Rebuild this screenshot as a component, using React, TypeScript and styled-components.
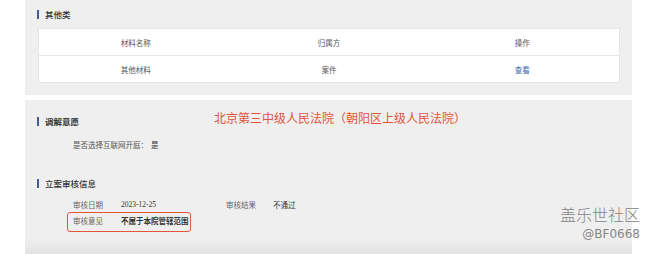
import React from 'react'
import styled, { createGlobalStyle } from 'styled-components'

const GlobalStyle = createGlobalStyle`
  html, body {
    margin: 0;
    padding: 0;
    background: #ffffff;
  }
  body {
    font-family: "Noto Sans CJK SC", "Liberation Serif", serif;
    color: #333333;
  }
`

const materials = [{ name: '其他材料', owner: '案件', action: '查看' }]

export default function App() {
  return (
    <Page>
      <GlobalStyle />

      <Panel>
        <SectionTitle>其他类</SectionTitle>
        <Table>
          <HeadRow>
            <Cell>材料名称</Cell>
            <Cell>归属方</Cell>
            <Cell>操作</Cell>
          </HeadRow>
          {materials.map((m) => (
            <BodyRow key={m.name}>
              <Cell>{m.name}</Cell>
              <Cell>{m.owner}</Cell>
              <Cell>
                <Link>{m.action}</Link>
              </Cell>
            </BodyRow>
          ))}
        </Table>
      </Panel>

      <LowerPanel>
        <CourtNote>北京第三中级人民法院（朝阳区上级人民法院）</CourtNote>

        <SectionTitle bold>调解意愿</SectionTitle>
        <OnlineRow>
          是否选择互联网开庭：<Value>是</Value>
        </OnlineRow>

        <SectionTitle spaced>立案审核信息</SectionTitle>
        <InfoGrid>
          <Label>审核日期</Label>
          <Value>2023-12-25</Value>
          <Label>审核结果</Label>
          <Value>不通过</Value>
        </InfoGrid>
        <InfoGrid marked>
          <Label>审核意见</Label>
          <Value strong>不属于本院管辖范围</Value>
          <HighlightBox />
        </InfoGrid>
      </LowerPanel>

      <Watermark>
        <WatermarkName>盖乐世社区</WatermarkName>
        <WatermarkId>@BF0668</WatermarkId>
      </Watermark>
    </Page>
  )
}

const Page = styled.div`
  position: relative;
  width: 650px;
  height: 254px;
  overflow: hidden;
  padding-left: 25px;
  box-sizing: border-box;
  display: flex;
  flex-direction: column;
  gap: 5px;
`

const Panel = styled.section`
  width: 607px;
  height: 95px;
  box-sizing: border-box;
  background: #efefef;
  padding: 7px 12px 0 12px;
  display: flex;
  flex-direction: column;
  gap: 7px;
`

const LowerPanel = styled.section`
  position: relative;
  width: 607px;
  flex: 1;
  box-sizing: border-box;
  background: linear-gradient(to bottom, #efefef 0, #efefef 138px, #e3e3e3 154px);
  padding: 14px 12px 0 12px;
  display: flex;
  flex-direction: column;
`

const SectionTitle = styled.div<{ bold?: boolean; spaced?: boolean }>`
  display: flex;
  align-items: center;
  gap: 6px;
  height: 14px;
  margin-top: ${(p) => (p.spaced ? '25px' : '0')};
  font-size: 8.5px;
  font-weight: ${(p) => (p.bold ? 700 : 500)};
  color: #333333;

  &::before {
    content: '';
    width: 2px;
    height: 9px;
    background: #3e5d9b;
  }
`

const Table = styled.div`
  margin-left: 1px;
  width: 582px;
  background: #ffffff;
  border: 1px solid #e6e6e6;
  box-sizing: border-box;
`

const HeadRow = styled.div`
  display: grid;
  grid-template-columns: repeat(3, 1fr);
  height: 27px;
  align-items: center;
  border-bottom: 1px solid #e6e6e6;
  box-sizing: border-box;
`

const BodyRow = styled(HeadRow)`
  border-bottom: none;
  height: 26px;
`

const Cell = styled.div`
  text-align: center;
  font-size: 7.5px;
  color: #555555;
`

const Link = styled.span`
  color: #3a68aa;
`

const CourtNote = styled.div`
  position: absolute;
  left: 189px;
  top: 11px;
  font-family: "Noto Sans CJK SC", sans-serif;
  font-size: 12px;
  line-height: 13px;
  color: #e2553a;
`

const OnlineRow = styled.div`
  margin-top: 9px;
  padding-left: 36px;
  height: 14px;
  display: flex;
  align-items: center;
  gap: 3px;
  font-size: 7.5px;
  color: #555555;
`

const InfoGrid = styled.div<{ marked?: boolean }>`
  position: relative;
  display: grid;
  grid-template-columns: 48px 105px 47px auto;
  align-items: center;
  height: 14px;
  margin-top: ${(p) => (p.marked ? '2px' : '7px')};
  padding-left: 36px;
`

const Label = styled.span`
  font-size: 7.5px;
  color: #666666;
`

const Value = styled.span<{ strong?: boolean }>`
  font-family: ${(p) => (p.strong ? '"Noto Sans CJK SC", sans-serif' : '"Liberation Serif", "Noto Sans CJK SC", serif')};
  font-size: 7.5px;
  font-weight: ${(p) => (p.strong ? 700 : 400)};
  color: #333333;
`

const HighlightBox = styled.div`
  position: absolute;
  left: 30px;
  top: -1px;
  width: 124px;
  height: 20px;
  box-sizing: border-box;
  border: 1.5px solid #e2553a;
  border-radius: 3px;
`

const Watermark = styled.div`
  position: absolute;
  right: 10px;
  top: 205px;
  display: flex;
  flex-direction: column;
  align-items: flex-end;
  gap: 4px;
  font-family: "Noto Sans CJK SC", sans-serif;
  color: #858585;
`

const WatermarkName = styled.span`
  font-size: 16px;
  line-height: 18px;
  font-weight: 300;
`

const WatermarkId = styled.span`
  font-family: "DejaVu Sans", sans-serif;
  font-size: 12px;
  line-height: 14px;
`
